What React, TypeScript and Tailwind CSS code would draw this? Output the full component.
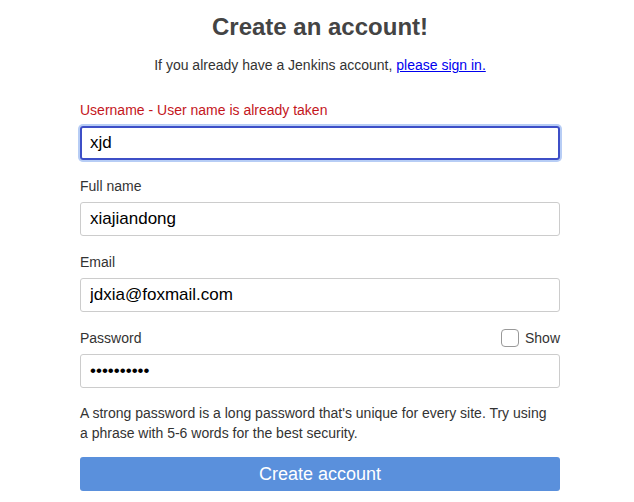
import { useState } from 'react';

export default function App() {
  const [showPwd, setShowPwd] = useState(false);

  return (
    <div className="w-[634px] h-[502px] bg-white overflow-hidden font-['Liberation_Sans',Arial,sans-serif]">
      <div className="w-[480px] ml-[80px] pt-[12px]">
        {/* Heading */}
        <h1 className="text-center text-[24px] leading-[30px] font-bold text-[#444]">Create an account!</h1>
        <p className="text-center text-[14px] leading-[20px] text-[#333] mt-[13px]">
          If you already have a Jenkins account,{' '}
          <a href="#" className="text-[#0000ee] underline">please sign in.</a>
        </p>

        {/* Fields */}
        <div className="mt-[25px]">
          <label className="block text-[14px] leading-[20px] text-[#c4161c]">Username - User name is already taken</label>
          <input
            defaultValue="xjd"
            className="mt-[6px] w-full h-[34px] px-[8px] text-[17px] text-black rounded-[3px] border-2 border-[#3d4fc7] shadow-[0_0_0_2px_#b7cdf5] outline-none"
          />
        </div>

        <div className="mt-[16px]">
          <label className="block text-[14px] leading-[20px] text-[#333]">Full name</label>
          <input
            defaultValue="xiajiandong"
            className="mt-[6px] w-full h-[34px] px-[9px] text-[17px] text-black rounded-[3px] border border-[#ccc] outline-none"
          />
        </div>

        <div className="mt-[16px]">
          <label className="block text-[14px] leading-[20px] text-[#333]">Email</label>
          <input
            defaultValue="jdxia@foxmail.com"
            className="mt-[6px] w-full h-[34px] px-[9px] text-[17px] text-black rounded-[3px] border border-[#ccc] outline-none"
          />
        </div>

        <div className="mt-[16px]">
          <div className="flex items-center justify-between">
            <label className="text-[14px] leading-[20px] text-[#333]">Password</label>
            <label className="flex items-center gap-[6px] text-[14px] leading-[20px] text-[#333]">
              <span
                onClick={() => setShowPwd(!showPwd)}
                className="w-[18px] h-[18px] rounded-[4px] border border-[#999] bg-white"
              />
              Show
            </label>
          </div>
          <input
            type={showPwd ? 'text' : 'password'}
            defaultValue="jdxia12345"
            className="mt-[6px] w-full h-[34px] px-[9px] text-[17px] text-black rounded-[3px] border border-[#ccc] outline-none"
          />
        </div>

        <p className="mt-[15px] max-w-[472px] text-[14px] leading-[20px] text-[#333]">
          A strong password is a long password that's unique for every site. Try using a phrase with 5-6 words for the best security.
        </p>

        <button className="mt-[14px] w-full h-[34px] rounded-[3px] bg-[#5a90dc] text-white text-[18px]">
          Create account
        </button>
      </div>
    </div>
  );
}
